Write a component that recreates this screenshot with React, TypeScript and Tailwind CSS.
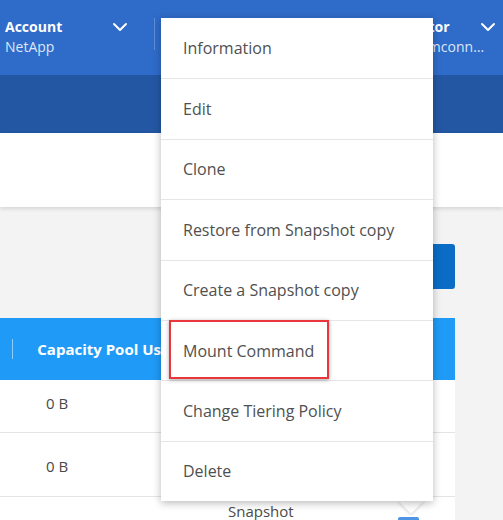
import React from 'react';
import { ChevronDown } from 'lucide-react';

const menuItems = [
  'Information',
  'Edit',
  'Clone',
  'Restore from Snapshot copy',
  'Create a Snapshot copy',
  'Mount Command',
  'Change Tiering Policy',
  'Delete',
];

const NavItem: React.FC<{ title: string; sub: string; className?: string; chevron?: string }> = ({
  title,
  sub,
  className,
  chevron,
}) => (
  <div className={`relative flex h-full shrink-0 flex-col pt-[17px] ${className ?? ''}`}>
    <span className="whitespace-nowrap text-[14px] font-bold leading-[20px] text-white">{title}</span>
    <span className="w-full truncate text-[14px] leading-[19px] text-[#dce7f8]">{sub}</span>
    <ChevronDown className={`absolute top-[15px] h-6 w-6 text-white ${chevron ?? 'right-[-2px]'}`} strokeWidth={2} />
  </div>
);

export default function App() {
  return (
    <div className="relative h-[520px] w-[503px] overflow-hidden bg-[#f3f3f3] font-['Open_Sans',sans-serif]">
      {/* top nav */}
      <div className="flex h-[75px] items-start bg-[#2f6bc9]">
        <NavItem title="Account" sub="NetApp" className="ml-[5px] w-[125px]" />
        <div className="ml-[24px] mt-[18px] h-[32px] w-px bg-[#5d8ed8]" />
        <div className="flex-1" />
        <NavItem
          title="Connector"
          sub="netapp-mconnector01"
          className="mr-[15px] w-[111px]"
          chevron="right-[-12px]"
        />
      </div>
      <div className="h-[58px] bg-[#2357a3]" />
      <div className="relative h-[74px] bg-white shadow-[0_2px_4px_rgba(0,0,0,0.12)]" />

      {/* content */}
      <div className="flex w-[455px] flex-col pt-[37px]">
        <div className="flex justify-end">
          <div className="h-[45px] w-[130px] rounded-[3px] bg-[#0b6cc6]" />
        </div>
        <div className="mt-[29px] bg-white">
          <div className="flex h-[62px] items-center bg-[#1f9bf7] text-white">
            <span className="ml-[-4px] text-[15px] font-bold opacity-60">:</span>
            <div className="ml-[12px] h-[20px] w-px bg-white/50" />
            <span className="ml-[24px] whitespace-nowrap text-[15px] font-bold">Capacity Pool Usage</span>
          </div>
          <div className="flex h-[53px] items-center border-b border-[#e4e4e4] pb-[6px] pl-[46px] text-[15px] text-[#4a4a4a]">
            0 B
          </div>
          <div className="flex h-[64px] items-center border-b border-[#e4e4e4] pl-[46px] pt-[3px] text-[15px] text-[#4a4a4a]">
            0 B
          </div>
          <div className="flex h-[40px] items-start pl-[228px] pt-[3px] text-[15px] text-[#4a4a4a]">
            <span>Snapshot</span>
            <div className="ml-[104px] mt-[17px] h-[10px] w-[21px] rounded-[2px] bg-[#4f95e6]" />
          </div>
        </div>
      </div>

      {/* menu caret */}
      <div className="absolute left-[402px] top-[492px] h-[18px] w-[18px] rotate-45 bg-white shadow-[1px_1px_3px_rgba(0,0,0,0.15)]" />

      {/* actions menu */}
      <div className="absolute left-[161px] top-[18px] w-[272px] bg-white shadow-[0_2px_8px_rgba(0,0,0,0.28)]">
        {menuItems.map((item, i) => (
          <div
            key={item}
            className={`flex h-[60.4px] items-center pl-[22px] text-[16px] text-[#505050] ${i > 0 ? 'border-t border-[#e6e6e6]' : ''}`}
          >
            {item}
          </div>
        ))}
      </div>

      {/* highlight box */}
      <div className="absolute left-[169px] top-[320px] h-[59px] w-[160px] border-2 border-[#e8363c] shadow-[0_1px_4px_rgba(0,0,0,0.35)]" />
    </div>
  );
}
